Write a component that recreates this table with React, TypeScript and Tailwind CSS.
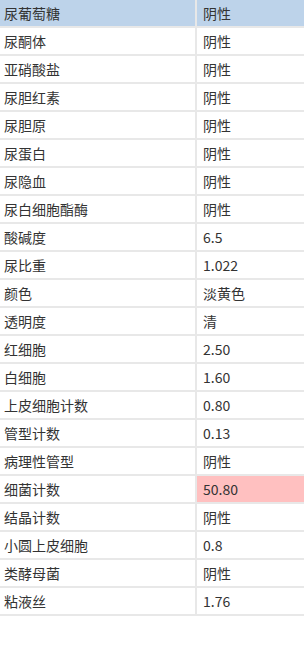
import React from 'react';

const rows: [string, string][] = [
  ['尿葡萄糖', '阴性'],
  ['尿酮体', '阴性'],
  ['亚硝酸盐', '阴性'],
  ['尿胆红素', '阴性'],
  ['尿胆原', '阴性'],
  ['尿蛋白', '阴性'],
  ['尿隐血', '阴性'],
  ['尿白细胞酯酶', '阴性'],
  ['酸碱度', '6.5'],
  ['尿比重', '1.022'],
  ['颜色', '淡黄色'],
  ['透明度', '清'],
  ['红细胞', '2.50'],
  ['白细胞', '1.60'],
  ['上皮细胞计数', '0.80'],
  ['管型计数', '0.13'],
  ['病理性管型', '阴性'],
  ['细菌计数', '50.80'],
  ['结晶计数', '阴性'],
  ['小圆上皮细胞', '0.8'],
  ['类酵母菌', '阴性'],
  ['粘液丝', '1.76'],
];

// 异常值高亮
const abnormal = new Set(['细菌计数']);

export default function App() {
  return (
    <div
      className="w-[304px] h-[659px] bg-white text-[14px] text-[#333]"
      style={{ fontFamily: '"Microsoft YaHei", "Noto Sans CJK SC", sans-serif' }}
    >
      {rows.map(([name, value], i) => (
        <div
          key={name}
          className={`flex h-[28px] border-b-2 border-[#e8e8e8] ${i === 0 ? 'bg-[#bdd3ea]' : ''}`}
        >
          <div className="w-[195px] pl-[4px] flex items-center leading-none">{name}</div>
          <div
            className={`flex-1 border-l-2 border-[#e8e8e8] pl-[6px] flex items-center leading-none ${
              abnormal.has(name) ? 'bg-[#ffc0c0]' : ''
            }`}
          >
            {value}
          </div>
        </div>
      ))}
    </div>
  );
}
